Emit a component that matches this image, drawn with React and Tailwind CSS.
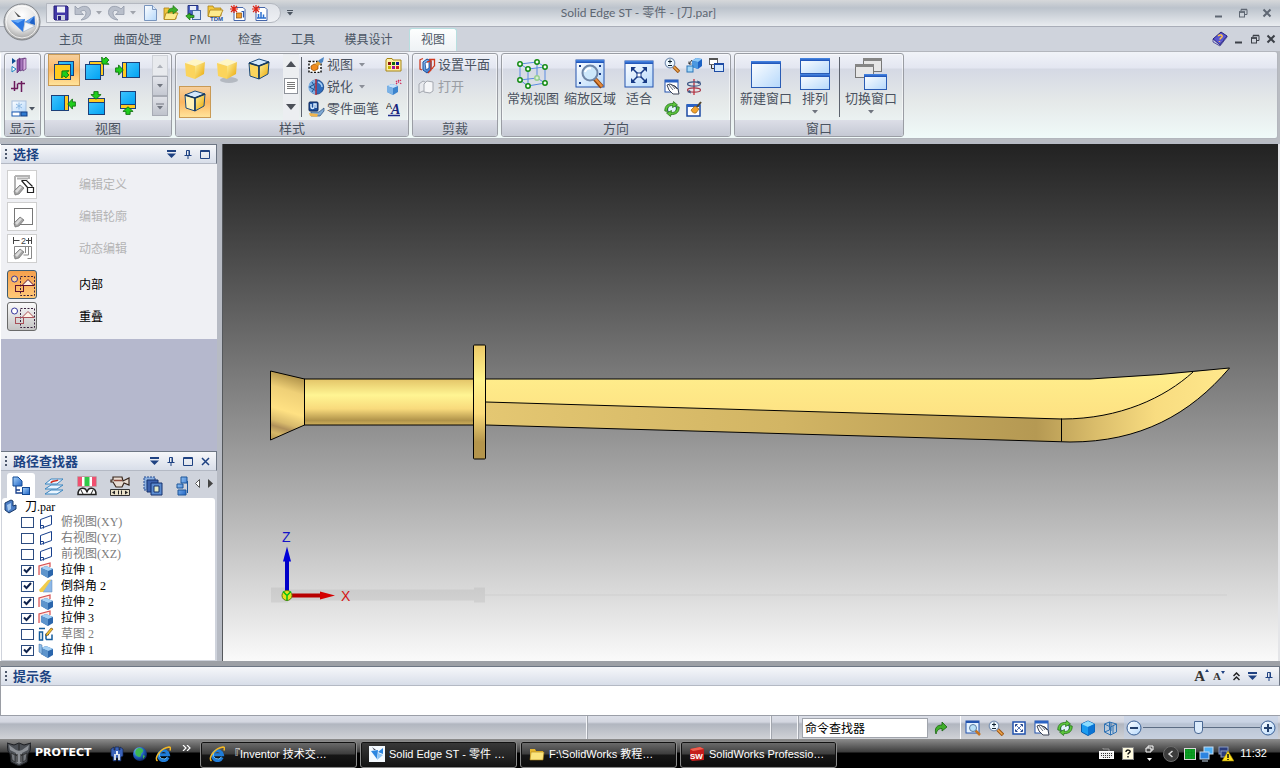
import React, { useState } from "react";

const UI_FONT = "font-['Open_Sans','Noto_Sans_CJK_SC',sans-serif]";
const TITLE_FONT = "font-['Lato','Noto_Sans_CJK_SC',sans-serif]";
const TREE_FONT = "font-['Liberation_Serif','Noto_Sans_CJK_SC',serif]";
const TASK_FONT = "font-['Liberation_Sans','Noto_Sans_CJK_SC',sans-serif]";

// Shared gradients, referenced by url(#id) from every icon
function Defs() {
  return (
    <svg width="0" height="0" className="absolute" aria-hidden="true">
      <defs>
        <linearGradient id="cyan" x1="0" y1="0" x2="1" y2="1">
          <stop offset="0" stopColor="#3fc4ff" />
          <stop offset="1" stopColor="#00a2f2" />
        </linearGradient>
        <linearGradient id="win" x1="0" y1="0" x2="1" y2="1">
          <stop offset="0" stopColor="#ffffff" />
          <stop offset="1" stopColor="#b5d8fb" />
        </linearGradient>
        <linearGradient id="bar" x1="0" y1="0" x2="0" y2="1">
          <stop offset="0" stopColor="#4a8ae6" />
          <stop offset="1" stopColor="#1c4fb4" />
        </linearGradient>
        <linearGradient id="blue" x1="0" y1="0" x2="1" y2="1">
          <stop offset="0" stopColor="#a9d4fb" />
          <stop offset="1" stopColor="#1d62c4" />
        </linearGradient>
        <linearGradient id="gold" x1="0" y1="0" x2="1" y2="1">
          <stop offset="0" stopColor="#fff3a0" />
          <stop offset="1" stopColor="#e9a400" />
        </linearGradient>
        <radialGradient id="orb" cx="0.5" cy="0.3" r="0.7">
          <stop offset="0" stopColor="#ffffff" />
          <stop offset="0.6" stopColor="#e3e3e3" />
          <stop offset="1" stopColor="#9b9b9b" />
        </radialGradient>
        <radialGradient id="globe" cx="0.35" cy="0.3" r="0.8">
          <stop offset="0" stopColor="#9fd0ff" />
          <stop offset="0.5" stopColor="#2263c0" />
          <stop offset="1" stopColor="#06194f" />
        </radialGradient>
      </defs>
    </svg>
  );
}

function Icon({ w = 16, h = 16, children }) {
  return (
    <svg width={w} height={h} viewBox={`0 0 ${w} ${h}`} fill="none" className="block shrink-0" aria-hidden="true">
      {children}
    </svg>
  );
}

function Caret({ color = "#4c5561" }) {
  return (
    <Icon w={6} h={4}>
      <path d="M0 0h6l-3 3.5z" fill={color} />
    </Icon>
  );
}

/* ---------- title bar icons ---------- */

function Orb() {
  return (
    <Icon w={38} h={38}>
      <circle cx="19" cy="19" r="18" fill="url(#orb)" stroke="#7f8389" />
      <circle cx="19" cy="19" r="16" stroke="#fff" strokeOpacity="0.8" />
      <path d="M8 17.500l14-1.500-2 13z" fill="#2b78e4" />
      <path d="M8 17.500l14-1.500-7 4z" fill="#6aaaf6" />
      <path d="M22 19l9.500-6 .5 9z" fill="#1f62c8" />
      <path d="M22 19l9.500-6-6 8z" fill="#5c9cf0" />
      <path d="M22 19l10 4-12 6z" fill="#f2f6fb" stroke="#8b9cb0" strokeWidth="0.5" />
      <path d="M11 8l7 6-3 0z" fill="#555" />
    </Icon>
  );
}

function SaveIcon() {
  return (
    <Icon>
      <path d="M1 1h13l1 1v13H2l-1-1z" fill="#4238a8" stroke="#241c74" />
      <rect x="4" y="1.5" width="8" height="6" fill="#eef1f8" />
      <rect x="4" y="10" width="8" height="5" fill="#c9cfdd" />
      <rect x="5" y="11" width="3" height="4" fill="#2a2280" />
    </Icon>
  );
}

function UndoIcon({ flip }) {
  return (
    <Icon w={17}>
      <g transform={flip ? "translate(17 0) scale(-1 1)" : undefined}>
        <path d="M1 1v8.500h8.500L6.500 7C8.500 4.500 12 5 12 8c0 3-2.500 5-5 7C12.500 14.500 16.500 11.500 16.500 7.500 16.500 0 8 0 4 4z" fill="#b9bfcb" stroke="#9299a8" strokeWidth="0.8" />
      </g>
    </Icon>
  );
}

function NewDocIcon() {
  return (
    <Icon w={13}>
      <path d="M.5 .5h8l4 4v11H.5z" fill="url(#win)" stroke="#7894bd" />
      <path d="M8.500 .5v4h4" fill="#dceafb" stroke="#7894bd" />
    </Icon>
  );
}

function OpenIcon() {
  return (
    <Icon>
      <path d="M1 3h5l1 2h6v9H1z" fill="#f0c63c" stroke="#a97f12" strokeWidth="0.8" />
      <path d="M3 8h12l-3 6.500H1z" fill="#fdeb8e" stroke="#a97f12" strokeWidth="0.8" />
      <path d="M5 8c0-4 2.500-5 5-5V.5L15 5l-5 4V6.500C8 6.500 6.500 7 5 8z" fill="#3fae2a" stroke="#1a6d10" strokeWidth="0.6" />
    </Icon>
  );
}

function SaveAllIcon() {
  return (
    <Icon>
      <path d="M3 .5h10v9H3z" fill="#4c63c4" stroke="#25327e" />
      <rect x="5" y="1" width="6" height="4" fill="#e8edf8" />
      <rect x="7.5" y="5.5" width="8" height="9" fill="#d6e4f8" stroke="#4a6aa6" />
      <path d="M9 12.500H5v2.500L.8 11 5 8v2.300h4z" fill="#38b42a" stroke="#15670c" strokeWidth="0.7" />
    </Icon>
  );
}

function TdmIcon() {
  return (
    <Icon w={17}>
      <path d="M1 1h5l1 2h7v8H1z" fill="#f3c93e" stroke="#a97f12" strokeWidth="0.8" />
      <path d="M3 5h13l-3 6.500H1z" fill="#fdeb8e" stroke="#a97f12" strokeWidth="0.8" />
      <text x="3" y="16" fontSize="6" fontWeight="700" fontFamily="Liberation Sans" fill="#1c4e9c">TDM</text>
    </Icon>
  );
}

function StarDocIcon({ chart }) {
  return (
    <Icon>
      <path d="M4 2.500h9l2 2v11H4z" fill="#fff" stroke="#4565a8" />
      {chart ? (
        <path d="M5 13h9M6.500 13V9M9 13V7M11.500 13V9.500" stroke="#2b6fd0" strokeWidth="1.5" />
      ) : (
        <>
          <rect x="6.5" y="8" width="5" height="5" fill="#f29b2c" stroke="#8b4a08" strokeWidth="0.7" />
          <path d="M11.500 6.500h2v6" stroke="#2b57ad" strokeWidth="1.2" />
        </>
      )}
      <path d="M4 0v8M0 4h8M1 1l6 6M7 1L1 7" stroke="#e02414" strokeWidth="1.2" />
    </Icon>
  );
}

/* ---------- ribbon icons ---------- */

function DisplayA() {
  return (
    <Icon w={17}>
      <path d="M1 1l4 3-4 3z" fill="#0e4f92" />
      <path d="M1 9.500l4 2.500-4 3z" fill="#fff" stroke="#1c86c2" />
      <path d="M6 3l3-2v12l-3 3z" fill="#8b4fa4" stroke="#4f1f64" strokeWidth="0.6" />
      <path d="M9 2l5-1v11l-5 2z" fill="#a878bc" stroke="#4f1f64" strokeWidth="0.6" />
      <path d="M12 2l3-1v11l-3 2z" fill="#d7b0e2" stroke="#4f1f64" strokeWidth="0.6" />
    </Icon>
  );
}

function DisplayB() {
  return (
    <Icon w={15} h={15}>
      <path d="M3.500 2v10M0 9.500h7M10.500 2v11M7 4.500h7M6.500 4.500V9.500" stroke="#6b1b5c" strokeWidth="1.5" />
    </Icon>
  );
}

function DisplayC() {
  return (
    <Icon w={17} h={17}>
      <rect x="1" y="1" width="14" height="11" fill="url(#win)" stroke="#a8c0de" />
      <path d="M8 2.500v7M5 4l6 4M11 4L5 8" stroke="#8cb8e2" />
      <rect x="1" y="12" width="8" height="4" fill="#fff" stroke="#1c5db2" />
      <rect x="10" y="12" width="6" height="4" fill="#2f7ad0" stroke="#123f86" />
    </Icon>
  );
}

function Arrow({ x, y, turn }) {
  return (
    <path d="M-4-2.500h3.500v-3.500L5 0-.5 6v-3.500H-4z" transform={`translate(${x} ${y}) rotate(${turn}) scale(.85)`} fill="#1fce1c" stroke="#0d6b0c" />
  );
}

function ViewIcon({ kind }) {
  const line = { stroke: "#1c3f78", strokeWidth: 1 };
  return (
    <Icon w={28} h={28}>
      {kind === "front" && (
        <>
          <rect x="8.500" y="5.500" width="15" height="14" fill="url(#cyan)" {...line} />
          <rect x="4.500" y="8.500" width="16" height="15" fill="#ffcb1f" {...line} />
          <Arrow x={15} y={18} turn={225} />
        </>
      )}
      {kind === "back" && (
        <>
          <path d="M7.500 5.500h14v14h-3v-11h-11z" fill="#ffcb1f" {...line} />
          <rect x="3.500" y="8.500" width="15" height="15" fill="url(#cyan)" {...line} />
          <Arrow x={23} y={5} turn={135} />
        </>
      )}
      {kind === "left" && (
        <>
          <rect x="8.500" y="6.500" width="4" height="15" fill="#ffcb1f" {...line} />
          <rect x="12.500" y="6.500" width="13" height="15" fill="url(#cyan)" {...line} />
          <Arrow x={5} y={14} turn={0} />
        </>
      )}
      {kind === "right" && (
        <>
          <rect x="1.500" y="6.500" width="13" height="15" fill="url(#cyan)" {...line} />
          <rect x="14.500" y="6.500" width="4" height="15" fill="#ffcb1f" {...line} />
          <Arrow x={22} y={15} turn={180} />
        </>
      )}
      {kind === "top" && (
        <>
          <rect x="6.500" y="9.500" width="16" height="4" fill="#ffcb1f" {...line} />
          <rect x="6.500" y="13.500" width="16" height="12" fill="url(#cyan)" {...line} />
          <Arrow x={14} y={6} turn={90} />
        </>
      )}
      {kind === "bottom" && (
        <>
          <rect x="6.500" y="2.500" width="15" height="13" fill="url(#cyan)" {...line} />
          <rect x="6.500" y="15.500" width="15" height="4" fill="#ffcb1f" {...line} />
          <Arrow x={14} y={22} turn={270} />
        </>
      )}
    </Icon>
  );
}

function StyleCube({ edges, shadow, frame }) {
  const stroke = edges ? "#1c4b7c" : "none";
  return (
    <Icon w={26} h={28}>
      {shadow && <ellipse cx="15" cy="24" rx="9" ry="3" fill="#9aa0a8" fillOpacity="0.6" />}
      <path d="M3 7l10-4 10 3-10 4z" fill={edges ? "#d4e8fc" : "#fff6c4"} stroke={stroke} strokeLinejoin="round" />
      <path d="M3 7l10 3v13L4 20z" fill={frame ? "#fff2b8" : "#fbd45c"} stroke={stroke} strokeLinejoin="round" />
      <path d="M13 10l10-4-1 12-9 5z" fill="url(#gold)" stroke={stroke} strokeLinejoin="round" />
      {edges && <path d="M3 7l10 3v13M13 10l10-4" stroke="#16395f" strokeWidth="1.5" />}
    </Icon>
  );
}

function DashPaint() {
  return (
    <Icon w={17}>
      <rect x="1" y="4.500" width="12" height="11" fill="#fff" stroke="#111" strokeDasharray="2 1.5" strokeWidth="1.5" />
      <path d="M3 9l3-2 4 1v4l-4 2-3-2z" fill="#f08a1c" stroke="#8a4300" strokeWidth="0.7" />
      <path d="M8 6l3-3 5-3-1 5-5 3z" fill="#4e86c4" />
      <path d="M7 7l3-3 3 3-3 2z" fill="#e8a233" />
    </Icon>
  );
}

function SharpenIcon() {
  return (
    <Icon w={17}>
      <circle cx="8.500" cy="8" r="7.200" fill="#2f6cbc" stroke="#14407e" strokeWidth="0.8" />
      <path d="M7.500 .8a7.200 7.200 0 0 0 0 14.400z" fill="#7db0e4" />
      <path d="M1.500 8l6-3.500M1.500 8l6 3.500M4 3l3 5-3 5" stroke="#184d8e" />
      <path d="M10 3c3 1 4 3 4 5" stroke="#a8d0f6" strokeWidth="1.5" />
      <path d="M8 0v16" stroke="#d21c1c" strokeWidth="1.2" />
    </Icon>
  );
}

function PartPaint() {
  return (
    <Icon w={17}>
      <rect x="1" y="1" width="9" height="9" rx="1" fill="#1d4f9c" stroke="#0d2758" />
      <path d="M3 3v3c0 2 3 2 3 0V3h2v4" stroke="#d8ecff" strokeWidth="1.5" />
      <path d="M3 11h8l5-4v3l-4 5H3z" fill="#7fa9d2" stroke="#2a4f7c" strokeWidth="0.7" />
      <path d="M1 12l9 1-1 3-7-1z" fill="#f0b64e" />
    </Icon>
  );
}

function PaletteIcon() {
  const dots = ["#8c1010", "#0d6b0c", "#10109c", "#c8b400", "#9c10a0", "#d02020"];
  return (
    <Icon w={17} h={14}>
      <path d="M1 2l1-1.500h5L8 2h8v11H1z" fill="#fff0a8" stroke="#a68514" />
      {dots.map((c, i) => (
        <rect key={c} x={3 + (i % 3) * 4} y={4 + Math.floor(i / 3) * 4} width="3" height="3" fill={c} />
      ))}
    </Icon>
  );
}

function SparkCube() {
  return (
    <Icon>
      <path d="M1 7l5-2 6 2v6l-5 3-6-3z" fill="#3c84ce" />
      <path d="M1 7l5-2 6 2-5 2z" fill="#c7e3fb" />
      <path d="M1 7l6 2v7l-6-3z" fill="#7bb2e6" />
      <path d="M10 5l5-4M12 1l1 1M14 4l2 1M10 2l1 1" stroke="#d02c5c" strokeWidth="1.2" strokeDasharray="1.5 1" />
    </Icon>
  );
}

function LetterIcon() {
  return (
    <Icon>
      <text x="0" y="8" fontSize="9" fontFamily="Liberation Sans" fill="#111">A</text>
      <text x="5" y="13" fontSize="14" fontWeight="700" fontStyle="italic" fontFamily="Liberation Serif" fill="#16247c">A</text>
      <path d="M2 14.500h12" stroke="#1c2a8c" strokeWidth="1.5" />
    </Icon>
  );
}

function ClipPlane() {
  return (
    <Icon w={18} h={17}>
      <path d="M5 5l4-3 4 2v9l-4 3-4-3z" fill="url(#blue)" stroke="#164a94" />
      <path d="M7 6l4-2v7l-3 2z" fill="#fff" stroke="#164a94" strokeWidth="0.8" />
      <path d="M2 3v9l2 1M1.500 3L5 1.500M11 2.500h5.500v7M9 5l4-1v9l-3 3M16 9l-2 3" stroke="#d03a20" strokeWidth="1.3" />
    </Icon>
  );
}

function ClipOpen() {
  return (
    <Icon w={18}>
      <path d="M1 5l4-3 4 2v9l-4-1-4 2z" fill="#e8eaee" stroke="#a4a8b0" />
      <path d="M6 5l3-3 6 1v9l-3 2-6-1z" fill="#f5f6f8" stroke="#a4a8b0" />
    </Icon>
  );
}

function CommonViews() {
  const pts = [[4, 6], [21, 4], [29, 9], [12, 11], [4, 22], [21, 20], [29, 25], [12, 28]];
  return (
    <Icon w={34} h={32}>
      <path d="M4 6l17-2 8 5-17 2zM4 6v16l8 6V11M12 28l17-3V9M21 4v16M4 22l17-2 8 5" stroke="#5a8be0" />
      {pts.map(([x, y], i) => (
        <circle key={i} cx={x} cy={y} r="2.200" fill={i === 5 ? "#d8f0d4" : "#f4fff2"} stroke={i === 5 ? "#98cf90" : "#128a12"} strokeWidth="1.500" />
      ))}
    </Icon>
  );
}

function ZoomArea() {
  return (
    <Icon w={30} h={30}>
      <rect x="1" y="1" width="28" height="27" fill="url(#win)" stroke="#2253ae" />
      <rect x="1" y="1" width="28" height="3" fill="url(#bar)" />
      <path d="M4 7h2M24 7h2M4 24h2M25 14v2" stroke="#173a86" strokeWidth="2" />
      <path d="M19 19l8 9" stroke="#8c4410" strokeWidth="4.5" />
      <path d="M19.500 19l7.500 8.500" stroke="#e58a3c" strokeWidth="2.5" />
      <circle cx="15" cy="14" r="7.5" fill="#cde8fb" stroke="#6f87a8" strokeWidth="2" />
      <path d="M10 13c1-3 4-4 6-3.500" stroke="#fff" strokeWidth="2" />
    </Icon>
  );
}

function FitIcon({ small }) {
  if (small) {
    return (
      <Icon w={14} h={14}>
        <rect x="1" y="1" width="12" height="12" fill="#fff" stroke="#2253ae" strokeWidth="1.5" />
        <path d="M4 4l6 6M10 4l-6 6" stroke="#5c78b4" />
        <path d="M3.500 5.500v-2h2M8.500 3.500h2v2M3.500 8.500v2h2M10.500 8.500v2h-2" stroke="#173a86" />
      </Icon>
    );
  }
  return (
    <Icon w={30} h={28}>
      <rect x="1" y="1" width="28" height="26" fill="url(#win)" stroke="#2253ae" />
      <rect x="1" y="1" width="28" height="3" fill="url(#bar)" />
      <path d="M9 9l12 12M21 9L9 21" stroke="#173a86" strokeWidth="1.5" />
      <path d="M7 7h5l-5 5zM23 7h-5l5 5zM7 23h5l-5-5zM23 23h-5l5-5z" fill="#173a86" />
      <rect x="13" y="13" width="4" height="4" fill="#fff" stroke="#173a86" />
    </Icon>
  );
}

function Magnifier() {
  return (
    <Icon>
      <path d="M9 9l6 6" stroke="#9c5410" strokeWidth="3.5" />
      <path d="M9.500 9.500l5 5" stroke="#f0a850" strokeWidth="1.5" />
      <circle cx="6" cy="6" r="4.800" fill="#eef8ff" stroke="#7c93b4" strokeWidth="1.2" />
      <path d="M4 4.500h4M6 2.500v4M4 8.500h4" stroke="#123" />
    </Icon>
  );
}

function PanIcon() {
  return (
    <Icon>
      <rect x="1" y="1" width="13" height="12" fill="#fff" stroke="#2253ae" />
      <rect x="1" y="1" width="13" height="2.500" fill="#2a62c4" />
      <path d="M3 6l3-1 2 1 3 1 3 3 1 5H9l-4-4z" fill="#fff" stroke="#3c4456" />
      <path d="M5 6l4 5M7 5l4 5M9 6l4 4" stroke="#3c4456" strokeWidth="0.8" />
    </Icon>
  );
}

function RotateIcon() {
  return (
    <Icon>
      <circle cx="8" cy="8" r="4.500" fill="#e4f2fd" stroke="#24508c" strokeWidth="1.2" />
      <path d="M.8 10C.5 5 4 2 9 2.500L9.500.5l4 3.500-5 2.500.2-2C5 4.500 3 6.500 3.500 10.500zM15.200 6c.3 5-3.200 8-8.200 7.500l-.5 2-4-3.500 5-2.500-.2 2c3.700 0 5.700-2 5.200-6z" fill="#5cc43c" stroke="#1a6a10" strokeWidth="0.7" />
    </Icon>
  );
}

function BlueBlocks() {
  return (
    <Icon w={17}>
      <path d="M6 4l4-3 6 1v7l-4 3-6-2z" fill="#1d62c4" />
      <path d="M6 4l4-3 6 1-4 3z" fill="#8cc8f6" />
      <path d="M6 4l6 1v7l-6-2z" fill="#4b98e0" />
      <rect x="1" y="9" width="6" height="6" fill="#a4d8f8" stroke="#2874b8" />
      <path d="M3 7l3-4M3 7V4.500M3 7h2.500" stroke="#333" />
    </Icon>
  );
}

function SpinIcon() {
  return (
    <Icon>
      <path d="M8 0v16" stroke="#c42430" strokeWidth="1.2" />
      <ellipse cx="8" cy="5" rx="6.500" ry="2.200" stroke="#3c5684" strokeWidth="1.2" />
      <ellipse cx="8" cy="11" rx="6.500" ry="2.200" stroke="#a83848" strokeWidth="1.2" />
      <path d="M11 1.500l4 1.500-3 2zM5 14.500L1 13l3-2z" fill="#3c5684" />
    </Icon>
  );
}

function PaintWindow() {
  return (
    <Icon>
      <rect x="1" y="4" width="13" height="11" fill="#fff" stroke="#1d4ba4" strokeWidth="1.5" />
      <rect x="1" y="3" width="13" height="3" fill="#2a62c4" />
      <path d="M5 9l4-4 4 3-3 4c-2 .5-4-.5-5-3z" fill="#f2a22c" stroke="#8a5408" strokeWidth="0.6" />
      <path d="M11 6l4-5" stroke="#52452c" strokeWidth="2" />
    </Icon>
  );
}

function WindowPair() {
  return (
    <Icon w={17}>
      <rect x="1.500" y="1.500" width="8" height="6" fill="#fff" stroke="#666" />
      <path d="M1 2h9" stroke="#555" strokeWidth="2" />
      <path d="M3.500 8v3.500H6" stroke="#333" />
      <rect x="6.500" y="6.500" width="9" height="8" fill="#d4e8fc" stroke="#1d4ba4" />
      <path d="M6 7h10" stroke="#1d4ba4" strokeWidth="2" />
    </Icon>
  );
}

function Win({ x, y, w, h, grey }) {
  return (
    <>
      <rect x={x + 0.5} y={y + 0.5} width={w - 1} height={h - 1} fill={grey ? "#e6e6e6" : "url(#win)"} stroke={grey ? "#777" : "#2a5cb4"} />
      <rect x={x} y={y} width={w} height="3" fill={grey ? "#858585" : "url(#bar)"} />
    </>
  );
}

/* ---------- small building blocks ---------- */

function Group({ label, className = "", children }) {
  return (
    <section className={`flex flex-col overflow-hidden rounded-[3px] border border-[#9a9da4] shadow-[inset_0_0_0_1px_rgba(255,255,255,0.5)] ${className}`}>
      <div className="flex min-h-0 flex-1">{children}</div>
      <h2 className="h-4 shrink-0 bg-linear-to-b from-[#dcdee7] to-[#c5c9d4] text-center text-[13px] leading-4 text-[#4a5260]">{label}</h2>
    </section>
  );
}

function GalleryCell({ active, label, children }) {
  return (
    <button
      type="button"
      aria-label={label}
      className={
        active
          ? "flex h-8 w-8 items-center justify-center border border-[#c99a55] bg-linear-to-b from-[#f6cf9c] via-[#fbb660] to-[#ffe39a]"
          : "flex h-8 w-8 items-center justify-center"
      }
    >
      {children}
    </button>
  );
}

function RibbonItem({ icon, caret, disabled, children }) {
  return (
    <button type="button" disabled={disabled} className={`flex h-[22px] items-center gap-[2px] whitespace-nowrap text-[13px] ${disabled ? "text-[#9a9da4]" : "text-[#4a5260]"}`}>
      {icon}
      <span>{children}</span>
      {caret && <span className="pl-1"><Caret color="#8b8f98" /></span>}
    </button>
  );
}

function BigButton({ icon, caret, children }) {
  return (
    <button type="button" className="flex shrink-0 flex-col items-center justify-start whitespace-nowrap text-[13px] text-[#4a5260]">
      <span className="flex h-8 items-center">{icon}</span>
      <span className="leading-4">{children}</span>
      {caret && <span className="pt-1"><Caret color="#6f747e" /></span>}
    </button>
  );
}

function IconButton({ label, className = "", children }) {
  return (
    <button type="button" aria-label={label} className={`flex shrink-0 items-center justify-center ${className}`}>
      {children}
    </button>
  );
}

function Divider() {
  return <div className="my-[3px] w-px shrink-0 bg-[#5d636e]" />;
}

/* ---------- window chrome ---------- */

function WindowButtons({ color }) {
  return (
    <>
      <IconButton label="最小化"><Icon w={10} h={10}><path d="M1 8.500h7" stroke={color} strokeWidth="2" /></Icon></IconButton>
      <IconButton label="还原">
        <Icon w={10} h={10}>
          <path d="M3 3V1.500h6v5H7" stroke={color} />
          <rect x="1.500" y="4" width="5" height="5" stroke={color} />
          <path d="M1 4h6M3 1.500h6" stroke={color} strokeWidth="1.5" />
        </Icon>
      </IconButton>
      <IconButton label="关闭"><Icon w={10} h={10}><path d="M1.500 1.500l7 7M8.500 1.500l-7 7" stroke={color} strokeWidth="2" /></Icon></IconButton>
    </>
  );
}

function TitleBar() {
  return (
    <header className="relative flex h-[27px] shrink-0 items-center border-b border-[#a9adb8] bg-linear-to-b from-[#d6d8da] via-[#bcc3cc] via-30% to-[#e9ecf0] pl-[46px]">
      <div className="absolute top-[3px] left-[3px] z-10">
        <button type="button" aria-label="应用程序按钮"><Orb /></button>
      </div>
      <div className="flex h-5 w-[235px] shrink-0 items-center rounded-r-full border border-[#b4b8c0] bg-linear-to-b from-[#dfe2e8] to-[#eef0f4] pl-[6px]">
        <IconButton label="保存"><SaveIcon /></IconButton>
        <IconButton label="撤消" className="ml-[5px]"><UndoIcon /></IconButton>
        <IconButton label="撤消列表" className="ml-[5px]"><Caret color="#a0a4ac" /></IconButton>
        <IconButton label="重做" className="ml-[6px]"><UndoIcon flip /></IconButton>
        <IconButton label="重做列表" className="ml-[5px]"><Caret color="#a0a4ac" /></IconButton>
        <div className="ml-2 flex items-center gap-[6px]">
          <IconButton label="新建"><NewDocIcon /></IconButton>
          <IconButton label="打开"><OpenIcon /></IconButton>
          <IconButton label="全部保存"><SaveAllIcon /></IconButton>
          <IconButton label="TDM"><TdmIcon /></IconButton>
          <IconButton label="新建零件"><StarDocIcon /></IconButton>
          <IconButton label="新建图纸"><StarDocIcon chart /></IconButton>
        </div>
      </div>
      <IconButton label="自定义" className="ml-[6px]">
        <Icon w={6} h={6}><path d="M0 .5h6" stroke="#4c5561" /><path d="M0 2h6l-3 3.500z" fill="#4c5561" /></Icon>
      </IconButton>
      <h1 className={`flex-1 pl-14 text-center text-xs whitespace-nowrap text-[#5d6672] ${TITLE_FONT}`}>Solid Edge ST - 零件 - [刀.par]</h1>
      <div className="flex w-[352px] shrink-0 items-center justify-end gap-[14px] pr-2">
        <WindowButtons color="#5f6773" />
      </div>
    </header>
  );
}

const TABS = [
  { name: "主页", width: "w-[66px]" },
  { name: "曲面处理", width: "w-[67px]" },
  { name: "PMI", width: "w-[58px]" },
  { name: "检查", width: "w-[42px]" },
  { name: "工具", width: "w-[64px]" },
  { name: "模具设计", width: "w-[67px] mr-[7px]" },
  { name: "视图", width: "w-12" },
];

function TabRow({ tab, setTab }) {
  return (
    <nav className="flex h-6 shrink-0 items-end bg-[#cfd3dc] pl-[38px]">
      <div className="flex h-[23px]">
        {TABS.map((t) => (
          <button
            key={t.name}
            type="button"
            onClick={() => setTab(t.name)}
            className={`${t.width} text-center text-xs whitespace-nowrap text-[#4a5564] ${
              tab === t.name ? "rounded-t-[3px] border border-b-0 border-[#b7dfe0] bg-linear-to-b from-[#fdfefe] to-[#eef2f5]" : ""
            }`}
          >
            {t.name}
          </button>
        ))}
      </div>
      <div className="ml-auto flex h-6 items-center gap-[6px] pr-1">
        <IconButton label="帮助">
          <Icon>
            <path d="M1 8l8-7 6 4-7 9z" fill="#5a57d0" stroke="#25207c" />
            <path d="M1 8v3l7 4 7-9V5l-7 9z" fill="#c9cdf0" stroke="#25207c" strokeWidth="0.7" />
            <path d="M6 5c2-2 5-1 4 1-.5 1-2 1-2 2.500M7.500 10v1" stroke="#ffc24a" strokeWidth="1.5" />
          </Icon>
        </IconButton>
        <WindowButtons color="#3c4048" />
      </div>
    </nav>
  );
}

function GalleryScroll() {
  return (
    <div className="mt-px flex w-4 shrink-0 flex-col">
      <button type="button" aria-label="上一行" className="flex h-[21px] items-center justify-center border border-[#cfd2d8] bg-[#e8eaee]"><span className="rotate-180"><Caret color="#aeb2ba" /></span></button>
      <button type="button" aria-label="下一行" className="flex h-5 items-center justify-center border border-[#a7abb4] bg-linear-to-b from-[#e2e4ea] to-[#c5c9d2]"><Caret color="#70757f" /></button>
      <button type="button" aria-label="更多" className="flex h-5 items-center justify-center border border-[#a7abb4] bg-linear-to-b from-[#dfe1e7] to-[#bfc3cc]">
        <Icon w={8} h={7}><path d="M0 1h8" stroke="#70757f" /><path d="M1 3h6l-3 3.500z" fill="#70757f" /></Icon>
      </button>
    </div>
  );
}

function Ribbon() {
  return (
    <div className="shrink-0 bg-[#b9bcc2] pb-[3px]">
      <div className="mr-[2px] flex h-[88px] gap-[3px] rounded-[3px] border border-[#b3b6bd] border-l-white bg-[linear-gradient(#f1f3f8_0,#e3e6f1_16px,#d5d9e4_17px,#e5e9e9_50px,#f0faf9_100%)] px-[3px] pt-px pb-px">
        <Group label="显示" className="w-[37px]">
          <div className="flex flex-col gap-[6px] pt-[3px] pl-[6px]">
            <IconButton label="构造显示" className="justify-start!"><DisplayA /></IconButton>
            <IconButton label="坐标系" className="justify-start!"><DisplayB /></IconButton>
            <IconButton label="背景" className="gap-px"><DisplayC /><Caret /></IconButton>
          </div>
        </Group>

        <Group label="视图" className="w-32">
          <div className="ml-[3px] grid grid-cols-3 grid-rows-2">
            <GalleryCell active label="前视图"><ViewIcon kind="front" /></GalleryCell>
            <GalleryCell label="后视图"><ViewIcon kind="back" /></GalleryCell>
            <GalleryCell label="左视图"><ViewIcon kind="left" /></GalleryCell>
            <GalleryCell label="右视图"><ViewIcon kind="right" /></GalleryCell>
            <GalleryCell label="俯视图"><ViewIcon kind="top" /></GalleryCell>
            <GalleryCell label="仰视图"><ViewIcon kind="bottom" /></GalleryCell>
          </div>
          <div className="ml-auto flex pr-[3px]"><GalleryScroll /></div>
        </Group>

        <Group label="样式" className="w-[234px]">
          <div className="ml-[3px] grid w-[104px] grid-cols-[32px_32px_32px] content-start">
            <GalleryCell label="着色"><StyleCube /></GalleryCell>
            <GalleryCell label="着色带阴影"><StyleCube shadow /></GalleryCell>
            <GalleryCell label="着色带隐藏边"><StyleCube edges /></GalleryCell>
            <GalleryCell active label="着色带可见边"><StyleCube edges frame /></GalleryCell>
          </div>
          <div className="flex w-4 shrink-0 flex-col items-center justify-between bg-[#eceef1] pt-[7px] pb-[10px]">
            <Icon w={10} h={6}><path d="M0 6h10L5 0z" fill="#4c5058" /></Icon>
            <div className="flex h-4 w-[14px] flex-col items-center justify-center gap-px border border-[#8f939b] bg-white">
              <i className="h-px w-2 bg-[#777]" /><i className="h-px w-2 bg-[#777]" /><i className="h-px w-2 bg-[#777]" /><i className="h-px w-2 bg-[#777]" />
            </div>
            <Icon w={10} h={6}><path d="M0 0h10L5 6z" fill="#4c5058" /></Icon>
          </div>
          <div className="flex pl-[2px]"><Divider /></div>
          <div className="flex flex-col pl-[6px]">
            <RibbonItem icon={<DashPaint />} caret>视图</RibbonItem>
            <RibbonItem icon={<SharpenIcon />} caret>锐化</RibbonItem>
            <RibbonItem icon={<PartPaint />}>零件画笔</RibbonItem>
          </div>
          <div className="ml-auto flex flex-col pr-[6px]">
            <IconButton label="颜色管理器" className="h-[22px]"><PaletteIcon /></IconButton>
            <IconButton label="视图覆盖" className="h-[22px]"><SparkCube /></IconButton>
            <IconButton label="字体" className="h-[22px]"><LetterIcon /></IconButton>
          </div>
        </Group>

        <Group label="剪裁" className="w-[86px]">
          <div className="flex flex-col pl-[5px]">
            <RibbonItem icon={<ClipPlane />}>设置平面</RibbonItem>
            <RibbonItem icon={<ClipOpen />} disabled>打开</RibbonItem>
          </div>
        </Group>

        <Group label="方向" className="w-[230px]">
          <div className="flex items-start gap-[5px] pt-1 pl-[5px]">
            <BigButton icon={<CommonViews />}>常规视图</BigButton>
            <BigButton icon={<ZoomArea />}>缩放区域</BigButton>
          </div>
          <div className="flex items-start pt-1 pl-2"><BigButton icon={<FitIcon />}>适合</BigButton></div>
          <div className="ml-auto grid grid-cols-[22px_22px_22px] grid-rows-[22px_22px_22px] pr-[3px]">
            <IconButton label="缩放"><Magnifier /></IconButton>
            <IconButton label="定向"><BlueBlocks /></IconButton>
            <IconButton label="上一视图"><WindowPair /></IconButton>
            <IconButton label="平移"><PanIcon /></IconButton>
            <IconButton label="绕轴旋转"><SpinIcon /></IconButton>
            <span />
            <IconButton label="旋转"><RotateIcon /></IconButton>
            <IconButton label="草图视图"><PaintWindow /></IconButton>
          </div>
        </Group>

        <Group label="窗口" className="w-[170px]">
          <div className="flex items-start gap-2 pt-1 pl-[5px]">
            <BigButton icon={<Icon w={30} h={27}><Win x={0} y={0} w={30} h={27} /></Icon>}>新建窗口</BigButton>
            <BigButton caret icon={<Icon w={30} h={32}><Win x={0} y={0} w={30} h={16} /><Win x={0} y={16} w={30} h={16} /></Icon>}>排列</BigButton>
          </div>
          <div className="ml-[9px] flex"><Divider /></div>
          <div className="flex items-start pt-1 pl-[5px]">
            <BigButton caret icon={<Icon w={34} h={32}><Win x={9} y={0} w={19} h={14} grey /><Win x={1} y={6} w={19} h={14} grey /><Win x={10} y={16} w={23} h={16} /></Icon>}>切换窗口</BigButton>
          </div>
        </Group>
      </div>
    </div>
  );
}

/* ---------- left panes ---------- */

function MenuGlyph() {
  return <Icon w={9} h={8}><path d="M0 1h9" stroke="#1f4282" strokeWidth="2" /><path d="M0 3.500h9L4.500 8z" fill="#1f4282" /></Icon>;
}

function PinGlyph() {
  return <Icon w={8} h={9}><path d="M2.500 5V.5h3V5M.5 5.500h7M4 5.500V9M5 1v4" stroke="#1f4282" /></Icon>;
}

function FloatGlyph() {
  return <Icon w={10} h={9}><path d="M.5 .5h9v8h-9zM.5 1.500h9" stroke="#1f4282" /></Icon>;
}

function PaneHeader({ title, children }) {
  return (
    <div className="flex h-5 shrink-0 items-center border-t border-r border-t-[#6d7684] border-r-[#6d7684] border-b border-b-[#b4b9c4] bg-linear-to-b from-[#f6f7fa] to-[#d8dee9] pr-[6px] pl-1">
      <Icon w={2} h={10}><path d="M1 0v2M1 4v2M1 8v2" stroke="#4d586c" strokeWidth="2" /></Icon>
      <h2 className="ml-[6px] flex-1 text-[13px] leading-none font-bold text-[#1c4382]">{title}</h2>
      <div className="flex items-center gap-2">{children}</div>
    </div>
  );
}

function PencilTip() {
  return (
    <>
      <path d="M5 19l6-6 4 3-5 6-4 1z" fill="#a4a4a4" stroke="#6c6c6c" strokeWidth="0.7" />
      <path d="M6 19l5-5 2 1-5 6z" fill="#dcdcdc" />
    </>
  );
}

function SelectArt({ kind }) {
  return (
    <Icon w={26} h={26}>
      {kind === "define" && (
        <>
          <path d="M6 4h14v3M6 4v14M8 6.500h11" stroke="#b4b4b4" strokeWidth="2" />
          <path d="M12.500 8.500h5l6 6M12.500 8.500l6 7M18.500 15.500h6v5h-6z" stroke="#222" strokeWidth="1.2" fill="#fff" />
          <PencilTip />
        </>
      )}
      {kind === "profile" && (
        <>
          <rect x="5.500" y="4.500" width="18" height="16" stroke="#777" />
          <PencilTip />
        </>
      )}
      {kind === "dynamic" && (
        <>
          <path d="M4.500 1v7M4.500 4.500h6M17 4.500h6M19.500 2v6M22.500 1v7" stroke="#444" />
          <text x="12" y="8" fontSize="9" fontFamily="Liberation Sans" fill="#444">2</text>
          <path d="M5.500 10.500h17v12h-4M19.500 11v8h-5M16.500 11v6M5.500 10.500V18" stroke="#888" />
          <PencilTip />
        </>
      )}
      {(kind === "inside" || kind === "overlap") && (
        <g stroke={kind === "inside" ? "#5c1030" : "#a85058"}>
          <rect x="11.500" y="4.500" width="14" height="19" strokeDasharray="2 1.5" stroke="#39223e" />
          <circle cx="5.500" cy="7" r="3" stroke="#34349c" fill={kind === "inside" ? "#ffd79a" : "#fff"} />
          <path d="M13 13.500l6-6 6 6z" fill="#fff3e6" />
          <rect x="6.500" y="13.500" width="8" height="6" />
        </g>
      )}
    </Icon>
  );
}

const SELECT_ROWS = [
  { kind: "define", label: "编辑定义", disabled: true },
  { kind: "profile", label: "编辑轮廓", disabled: true },
  { kind: "dynamic", label: "动态编辑", disabled: true },
  { kind: "inside", label: "内部", space: true },
  { kind: "overlap", label: "重叠" },
];

const SELECT_FRAMES = {
  inside: "rounded-[3px] border-[#3f5c70] bg-linear-to-b from-[#f5a04c] to-[#ffc978]",
  overlap: "rounded-[3px] border-[#6a6a6a] bg-linear-to-b from-[#fafafa] to-[#c4c4c4]",
};

function SelectPane() {
  return (
    <section>
      <PaneHeader title="选择">
        <IconButton label="菜单"><MenuGlyph /></IconButton>
        <IconButton label="固定"><PinGlyph /></IconButton>
        <IconButton label="浮动"><FloatGlyph /></IconButton>
      </PaneHeader>
      <div className="flex flex-col gap-[3px] bg-[#eff0f4] pt-[6px] pb-2 pl-[6px]">
        {SELECT_ROWS.map((row) => (
          <button key={row.kind} type="button" disabled={row.disabled} className={`flex items-center text-left ${row.space ? "mt-1" : ""}`}>
            <span className={`flex h-[29px] w-[30px] items-center justify-center border ${SELECT_FRAMES[row.kind] || "border-[#cfcfcf] bg-white"}`}>
              <SelectArt kind={row.kind} />
            </span>
            <span className={`ml-[42px] text-xs ${row.disabled ? "text-[#b4b4b4]" : "text-black"}`}>{row.label}</span>
          </button>
        ))}
      </div>
    </section>
  );
}

function TreeIcon({ kind }) {
  return (
    <Icon>
      {kind === "plane" && <path d="M2.500 5.500l11-4v9l-11 4zM2.500 11.500h3v3" stroke="#173f8c" />}
      {(kind === "extrude" || kind === "body") && (
        <>
          {kind === "extrude" && <path d="M1 13V4l11-3v4" stroke="#d85050" strokeWidth="1.2" fill="#fde8e4" />}
          <path d="M3 6l5-2 7 3v6l-5 3-7-4z" fill="#2b66ac" />
          <path d="M3 6l5-2 7 3-5 2z" fill="#a4d0f4" />
          <path d="M3 6l7 3v7l-7-4z" fill="#5d94cc" />
          {kind === "body" && <path d="M1 2l3 1v9l-3-2z" fill="#8fbce6" stroke="#3c6ca0" strokeWidth="0.5" />}
        </>
      )}
      {kind === "chamfer" && (
        <>
          <path d="M5 14L11 2h3v12z" fill="#8cb8e8" stroke="#5c84b4" strokeWidth="0.5" />
          <path d="M1 12L10 2h3L5 14H2z" fill="#f1cc4c" />
        </>
      )}
      {kind === "sketch" && (
        <>
          <path d="M1 2.500h6M1.500 6v8h3V6zM8 13.500h6v-5M8 13.500v-5h3" stroke="#155c9c" strokeWidth="1.5" />
          <path d="M8 8l5-6 2 1-5 6-2 1z" fill="#f2c22c" stroke="#6c3c08" strokeWidth="0.6" />
        </>
      )}
    </Icon>
  );
}

const TREE = [
  { id: 1, name: "俯视图(XY)", kind: "plane", on: false },
  { id: 2, name: "右视图(YZ)", kind: "plane", on: false },
  { id: 3, name: "前视图(XZ)", kind: "plane", on: false },
  { id: 4, name: "拉伸 1", kind: "extrude", on: true },
  { id: 5, name: "倒斜角 2", kind: "chamfer", on: true },
  { id: 6, name: "拉伸 2", kind: "extrude", on: true },
  { id: 7, name: "拉伸 3", kind: "extrude", on: true },
  { id: 8, name: "草图 2", kind: "sketch", on: false },
  { id: 9, name: "拉伸 1", kind: "body", on: true },
];

function TreeRow({ item, onToggle }) {
  return (
    <li className="h-4">
      <label className={`flex h-4 items-center pl-[19px] text-xs ${item.on ? "text-black" : "text-[#7c7c7c]"}`}>
        <span className="relative flex">
          <input type="checkbox" checked={item.on} onChange={onToggle} className="h-[11px] w-[13px] appearance-none border border-[#2c4c80] bg-white" />
          {item.on && (
            <span className="pointer-events-none absolute top-px left-[2px]">
              <Icon w={9} h={8}><path d="M1 3.500l2.500 2.500L8 1" stroke="#10234c" strokeWidth="2" /></Icon>
            </span>
          )}
        </span>
        <span className="ml-1"><TreeIcon kind={item.kind} /></span>
        <span className="ml-[7px]">{item.name}</span>
      </label>
    </li>
  );
}

function PathFinder() {
  const [items, setItems] = useState(TREE);

  const toggle = (id) => {
    setItems(items.map((it) => (it.id === id ? { ...it, on: !it.on } : it)));
  };

  return (
    <section className="mt-auto bg-[#cfd3dc]">
      <PaneHeader title="路径查找器">
        <IconButton label="菜单"><MenuGlyph /></IconButton>
        <IconButton label="固定"><PinGlyph /></IconButton>
        <IconButton label="浮动"><FloatGlyph /></IconButton>
        <IconButton label="关闭"><Icon w={9} h={9}><path d="M1 1l7 7M8 1L1 8" stroke="#1f4282" strokeWidth="1.5" /></Icon></IconButton>
      </PaneHeader>
      <div className="flex h-[27px] items-end pl-[6px]">
        <button type="button" aria-label="路径查找器" className="flex h-[25px] w-7 items-center justify-center rounded-t-[3px] bg-white">
          <Icon w={20} h={20}>
            <path d="M5 10v7h7M5 14h4" stroke="#173f8c" strokeWidth="1.3" />
            <path d="M2 1h5l4 4v5H2z" fill="url(#blue)" stroke="#134a94" />
            <rect x="11.500" y="11.500" width="7" height="7" fill="url(#blue)" stroke="#134a94" />
          </Icon>
        </button>
        <div className="flex h-[25px] items-center gap-[13px] pl-[9px]">
          <IconButton label="层">
            <Icon w={20} h={20}>
              <path d="M1 18l6-4h12l-6 4zM1 13l6-4h12l-6 4zM1 8l6-5h12l-6 5z" fill="#eaf5ff" stroke="#3b85bf" />
              <path d="M7 7c1-3 5-1 7-3" stroke="#d02c1c" strokeWidth="1.5" />
            </Icon>
          </IconButton>
          <IconButton label="传感器">
            <Icon w={20} h={20}>
              <path d="M.5 .5h19v10H.5z" fill="#fff" stroke="#c0a0a8" />
              <path d="M1 1h4v9H1zM15 1h4v9h-4z" fill="#f05070" />
              <path d="M7.500 1h5v9h-5z" fill="#30c848" />
              <path d="M1 18.500c0-8 8.500-8 9-2 .5-6 9-6 9 2z" fill="#fff" stroke="#222" strokeWidth="1.5" />
              <path d="M6 18l-2-4M14 18l2-4" stroke="#222" />
            </Icon>
          </IconButton>
          <IconButton label="特征回放">
            <Icon w={20} h={20}>
              <path d="M3 1h9l1 4 6-3v7l-5-2-2 4H6L3 6H1V4h2z" fill="#e8dcd2" stroke="#38261c" strokeWidth="1.2" />
              <path d="M4 4.500h8" stroke="#8c4a3c" strokeWidth="1.5" />
              <path d="M.5 13.500h19v6H.5z" fill="#e8e0c8" stroke="#333" />
              <path d="M5 14.500l-3 2 3 2zM15 14.500l3 2-3 2zM8 14.500v4h1v-4zM11 14.500v4h1v-4z" fill="#222" />
            </Icon>
          </IconButton>
          <IconButton label="零件库">
            <Icon w={20} h={20}>
              <path d="M1 1h11v13H1z" fill="#8cb0e0" stroke="#244a90" strokeDasharray="2 1" />
              <path d="M4 4h11v12H4z" fill="#3a60ac" stroke="#14306c" />
              <path d="M8 7h11v12H8z" fill="#5c8cd0" stroke="#14306c" />
              <path d="M11 10h5v6h-5z" fill="#e4ecc8" stroke="#14306c" />
            </Icon>
          </IconButton>
          <IconButton label="族">
            <Icon w={12} h={20}>
              <path d="M5 1h6v6H5zM1 8h6v4H1zM2 14h8v5H2z" fill="url(#blue)" stroke="#1c5498" />
              <path d="M11.500 5v12" stroke="#1c5498" />
            </Icon>
          </IconButton>
        </div>
        <div className="ml-auto flex h-[30px] items-center gap-2 pr-1">
          <IconButton label="向左"><Icon w={5} h={9}><path d="M4.500 .5v8L.5 4.500z" fill="#fff" stroke="#555" /></Icon></IconButton>
          <IconButton label="向右"><Icon w={5} h={9}><path d="M0 0v9l5-4.500z" fill="#444" /></Icon></IconButton>
        </div>
      </div>
      <div className={`mr-[2px] mb-px ml-px h-[162px] overflow-hidden rounded-t-[3px] bg-white ${TREE_FONT}`}>
        <p className="flex h-4 items-center gap-2 pt-px pl-[2px] text-xs text-black">
          <Icon w={13} h={15}>
            <path d="M1 4l6-3 2 1v5l3-1v4l-7 4-4-3z" fill="#4a7cc4" stroke="#173868" />
            <path d="M3 6l4-2v6l-3 2z" fill="#a4c8f0" />
          </Icon>
          刀.par
        </p>
        <ul>
          {items.map((item) => (
            <TreeRow key={item.id} item={item} onToggle={() => toggle(item.id)} />
          ))}
        </ul>
      </div>
    </section>
  );
}

/* ---------- model viewport ---------- */

function Viewport() {
  return (
    <main className="min-w-0 flex-1 overflow-hidden border-l border-[#55585c] bg-linear-to-b from-[#222222] to-[#fafafa]">
      <svg viewBox="223 145 1055 516" className="h-full w-full" fill="none" aria-label="刀.par">
        <defs>
          <linearGradient id="grip" x1="0" y1="0" x2="0" y2="1">
            <stop offset="0" stopColor="#e3c468" />
            <stop offset="0.35" stopColor="#fff593" />
            <stop offset="0.65" stopColor="#f8da7c" />
            <stop offset="0.9" stopColor="#b0934a" />
            <stop offset="1" stopColor="#d0b05c" />
          </linearGradient>
          <linearGradient id="pommel" x1="0" y1="0" x2="-0.15" y2="1">
            <stop offset="0" stopColor="#b99b50" />
            <stop offset="0.2" stopColor="#efd077" />
            <stop offset="0.5" stopColor="#ffe183" />
            <stop offset="0.68" stopColor="#d8ba6c" />
            <stop offset="0.76" stopColor="#b0905a" />
            <stop offset="0.86" stopColor="#d6b868" />
            <stop offset="1" stopColor="#a88a48" />
          </linearGradient>
          <linearGradient id="guard" x1="0" y1="0" x2="0" y2="1">
            <stop offset="0" stopColor="#ecc968" />
            <stop offset="0.3" stopColor="#fff48e" />
            <stop offset="0.6" stopColor="#fcdc7c" />
            <stop offset="0.85" stopColor="#b4954c" />
            <stop offset="1" stopColor="#b4954c" />
          </linearGradient>
          <linearGradient id="flat" x1="0" y1="0" x2="0" y2="1">
            <stop offset="0" stopColor="#ffee8c" />
            <stop offset="1" stopColor="#fde182" />
          </linearGradient>
          <linearGradient id="edge" x1="0" y1="0" x2="1" y2="0">
            <stop offset="0" stopColor="#e4c772" />
            <stop offset="0.4" stopColor="#d2b564" />
            <stop offset="0.74" stopColor="#b59953" />
            <stop offset="0.82" stopColor="#dabd6b" />
            <stop offset="0.9" stopColor="#f8dc80" />
            <stop offset="1" stopColor="#ffe88c" />
          </linearGradient>
        </defs>
        <g fill="#000" fillOpacity="0.06">
          <rect x="271" y="588" width="17" height="15" />
          <rect x="288" y="590" width="186" height="11" />
          <rect x="474" y="588" width="11" height="15" />
          <rect x="485" y="595" width="742" height="1" />
        </g>
        {/* blade: bevel first, flat on top, then the outlines */}
        <path d="M486 379.500H1090Q1160 376 1229.500 368.500C1190 415 1140 442.500 1070 442.500L486 425.500z" fill="url(#edge)" />
        <path d="M486 379.500H1090Q1141.500 377 1193 372.500C1165 398 1120 419.500 1062 419.500L486 402.500z" fill="url(#flat)" />
        <g stroke="#000" strokeWidth="1">
          <path d="M486 379.500H1090Q1160 376 1229.500 368.500C1190 415 1140 442.500 1070 442.500L486 425.500M1193 372.500C1165 398 1120 419.500 1062 419.500L486 402.500M1061.500 419v23" />
          <rect x="304.500" y="379.500" width="169" height="46" fill="url(#grip)" />
          <path d="M270.500 371.500l34 8v46l-34 15z" fill="url(#pommel)" />
          <rect x="473.500" y="345.500" width="12" height="114" rx="1" fill="url(#guard)" />
        </g>
        <rect x="285" y="560" width="4" height="33" fill="#0000c8" />
        <path d="M287 547l4 15h-8z" fill="#0000d8" />
        <rect x="292" y="594" width="32" height="4" fill="#b80000" />
        <path d="M335 596l-15 4v-8z" fill="#d40000" />
        <circle cx="287" cy="596" r="5" fill="#e8e020" stroke="#5a7c10" />
        <path d="M283 592l4 4 4-4M287 596v5" stroke="#00c010" strokeWidth="1.5" />
        <text x="282" y="542" fontSize="14" fontFamily="Liberation Sans" fill="#1414c8">Z</text>
        <text x="341" y="601" fontSize="14" fontFamily="Liberation Sans" fill="#d41414">X</text>
      </svg>
    </main>
  );
}

/* ---------- bottom bars ---------- */

function PromptBar() {
  return (
    <section className="mt-[5px] shrink-0 border-l border-[#9a9da4] bg-white">
      <PaneHeader title="提示条">
        <button type="button" aria-label="增大字体" className="flex items-start font-['Liberation_Serif',serif] text-[15px] leading-none font-bold text-[#333]">A<Icon w={4} h={3}><path d="M0 3h4L2 0z" fill="#1f4282" /></Icon></button>
        <button type="button" aria-label="减小字体" className="-ml-1 flex items-start font-['Liberation_Serif',serif] text-[11px] leading-none font-bold text-[#333]">A<Icon w={4} h={3}><path d="M0 0h4L2 3z" fill="#1f4282" /></Icon></button>
        <IconButton label="折叠"><Icon w={7} h={9}><path d="M.5 4l3-3 3 3M.5 8l3-3 3 3" stroke="#222" strokeWidth="1.5" /></Icon></IconButton>
        <IconButton label="菜单"><MenuGlyph /></IconButton>
        <IconButton label="固定"><PinGlyph /></IconButton>
      </PaneHeader>
      <div className="h-[29px]" />
    </section>
  );
}

function StatusBar() {
  return (
    <footer className="flex h-6 shrink-0 items-stretch border-t border-[#9b9fa8] bg-[linear-gradient(#dcdfe8,#d3d6e0_6px,#b1b6c0_8px,#d0d2d6)]">
      <div className="flex-1 border-r border-[#f4f5f8]" />
      <div className="w-[184px] shrink-0 border-r border-l border-r-[#f4f5f8] border-l-[#a2a6ae]" />
      <div className="w-[27px] shrink-0 border-r border-l border-r-[#f4f5f8] border-l-[#a2a6ae]" />
      <div className="flex shrink-0 items-center border-l border-[#a2a6ae] pl-[3px]">
        <input
          aria-label="命令查找器"
          defaultValue="命令查找器"
          className={`h-5 w-[126px] border border-[#a0a4ac] bg-white px-[2px] text-xs text-black outline-none ${UI_FONT}`}
        />
        <IconButton label="查找" className="ml-[5px]">
          <Icon><path d="M3 14C1 8 4 5 9 5V2l5 5-5 4V8.500C6 8.500 4 10 3 14z" fill="#3fae2a" stroke="#17620e" strokeWidth="0.8" /></Icon>
        </IconButton>
      </div>
      <div className="ml-[11px] flex shrink-0 items-center gap-[7px] border-l border-white pl-1">
        <IconButton label="缩放区域" className="w-4">
          <Icon>
            <rect x="1" y="1" width="13" height="12" fill="#e4f2ff" stroke="#2253ae" />
            <rect x="1" y="1" width="13" height="2" fill="#2253ae" />
            <path d="M10 10l5 5" stroke="#c47424" strokeWidth="2.5" />
            <circle cx="8" cy="8" r="3.5" fill="#b8e0f8" stroke="#5c7ca0" />
          </Icon>
        </IconButton>
        <IconButton label="缩放" className="w-4"><Magnifier /></IconButton>
        <IconButton label="适合" className="w-4"><FitIcon small /></IconButton>
        <IconButton label="平移" className="w-4"><PanIcon /></IconButton>
        <IconButton label="旋转" className="w-4"><RotateIcon /></IconButton>
        <IconButton label="视图方向" className="w-4">
          <Icon>
            <path d="M1.500 4L8 1l6.500 3v8L8 15.500 1.500 12z" fill="#1c9cf0" stroke="#0b5cac" />
            <path d="M1.500 4L8 1l6.500 3L8 7z" fill="#8cdcff" />
            <path d="M8 7l6.500-3v8L8 15.500z" fill="#0c74d4" />
          </Icon>
        </IconButton>
        <IconButton label="视图样式" className="w-4">
          <Icon><path d="M1.500 4l6 3v8l-6-3zM7.500 7l6-3v8l-6 3M1.500 4l5-2v8l-5 2M8 2v9M6.500 2l7 2M10 6v7" stroke="#2f72b4" fill="#b4d8f4" fillOpacity="0.4" /></Icon>
        </IconButton>
      </div>
      <div className="mr-[2px] ml-[5px] flex w-[154px] shrink-0 items-center justify-between bg-[#bfd0e8]/50 px-[2px]">
        <IconButton label="缩小"><Icon><circle cx="8" cy="8" r="7" fill="url(#win)" stroke="#3a6096" /><path d="M4 8h8" stroke="#24406c" strokeWidth="2" /></Icon></IconButton>
        <input
          type="range"
          aria-label="缩放比例"
          defaultValue="48"
          className="h-4 w-[117px] appearance-none bg-[linear-gradient(#5c6c84,#5c6c84)] bg-[length:100%_1px] bg-center bg-no-repeat [&::-webkit-slider-thumb]:h-[13px] [&::-webkit-slider-thumb]:w-[9px] [&::-webkit-slider-thumb]:appearance-none [&::-webkit-slider-thumb]:rounded-b-[4px] [&::-webkit-slider-thumb]:border [&::-webkit-slider-thumb]:border-[#4a6894] [&::-webkit-slider-thumb]:bg-[#dcebfb]"
        />
        <IconButton label="放大"><Icon><circle cx="8" cy="8" r="7" fill="url(#win)" stroke="#3a6096" /><path d="M4 8h8M8 4v8" stroke="#24406c" strokeWidth="2" /></Icon></IconButton>
      </div>
    </footer>
  );
}

function IeIcon() {
  return (
    <Icon>
      <path d="M13.200 11.500A5 5 0 1 1 13.500 8.800H4.500" stroke="#1f7cd8" strokeWidth="3" />
      <path d="M12.500 11A4.500 4.500 0 0 1 4.500 7" stroke="#6cc4fa" strokeWidth="1" />
      <path d="M2.500 15C-1.500 12 6 2 14 1c2 0 1.500 2 1 3.500" stroke="#f4b824" strokeWidth="1.5" />
    </Icon>
  );
}

const TASKS = [
  { name: "『Inventor 技术交…", icon: <IeIcon /> },
  {
    name: "Solid Edge ST - 零件 …",
    active: true,
    icon: (
      <Icon>
        <rect width="16" height="16" fill="#f4faff" />
        <path d="M2 5l7-1-1 9z" fill="#2c86e0" />
        <path d="M9 6l5-4v6z" fill="#2c86e0" />
        <path d="M9 7l5 2-6 5z" fill="#8cc4f4" />
        <path d="M3 1l4 3H5z" fill="#445" />
      </Icon>
    ),
  },
  {
    name: "F:\\SolidWorks 教程…",
    icon: (
      <Icon>
        <path d="M1 3h5l1 2h7v9H1z" fill="#e8b830" />
        <path d="M1 14L2 6h13l-1 8z" fill="#fbe47c" stroke="#a87c10" strokeWidth="0.6" />
      </Icon>
    ),
  },
  {
    name: "SolidWorks Professio…",
    icon: (
      <Icon>
        <path d="M1 3l10-2 4 2v11l-12 1-2-2z" fill="#c41c1c" />
        <path d="M1 3l10-2 4 2-11 2z" fill="#f06050" />
        <text x="1" y="13" fontSize="8" fontWeight="700" fontFamily="Liberation Sans" fill="#fff">SW</text>
      </Icon>
    ),
  },
];

function TaskBar() {
  return (
    <footer className={`flex h-[29px] shrink-0 items-center bg-[linear-gradient(#8c8c8c,#3c3c3c_13px,#000_14px)] pr-[13px] text-[11px] text-white ${TASK_FONT}`}>
      <button type="button" className="flex w-[102px] shrink-0 items-center gap-1 pl-[7px] font-['DejaVu_Sans',sans-serif] text-[11px] font-bold">
        <Icon w={24} h={24}>
          <path d="M0 1l7 2 5-2 5 2 7-2-1 8-2 3-1 8-8 4-8-4-1-8-2-3z" fill="#4c5056" stroke="#1c1e22" />
          <path d="M2 3l7 5 3 1 3-1 7-5-1 5-6 3v9l-3 2-3-2v-9L3 8z" fill="#8c9096" />
          <path d="M4 11l4 2v7l-3-2zM20 11l-4 2v7l3-2z" fill="#74787e" stroke="#222" strokeWidth="0.7" />
          <path d="M12 2v6M10 12v8M14 12v8M8 12.500l2 1M16 12.500l-2 1" stroke="#222" />
        </Icon>
        PROTECT
      </button>
      <div className="flex w-[98px] shrink-0 items-center gap-[7px] pl-[7px]">
        <IconButton label="桌面">
          <Icon>
            <path d="M2 3l3-2v3h1V1h4v3h1V1l3 2v7l-2 1v4H9v-3H7v3H4v-4l-2-1z" fill="#3a62b8" stroke="#12224c" strokeWidth="0.7" />
            <path d="M5 8h2v6H5zM9 8h2v6H9z" fill="#cfd8e6" />
            <path d="M7 5h2v4H7z" fill="#e4ecf8" />
          </Icon>
        </IconButton>
        <IconButton label="浏览网络">
          <Icon>
            <circle cx="8" cy="8" r="7" fill="url(#globe)" />
            <path d="M4 4c2-3 6-2 7 0s-2 2-2 5-4 2-5 0-1-4 0-5zM11 9l2 1-2 3z" fill="#3cb850" />
          </Icon>
        </IconButton>
        <IconButton label="Internet Explorer"><IeIcon /></IconButton>
        <IconButton label="更多" className="ml-1 mb-3"><Icon w={9} h={6}><path d="M1 0l3 3-3 3M5 0l3 3-3 3" stroke="#fff" strokeWidth="1.2" /></Icon></IconButton>
      </div>
      <div className="flex h-full min-w-0 flex-1 items-center gap-[3px] pt-px">
        {TASKS.map((task) => (
          <button
            key={task.name}
            type="button"
            className={`flex h-[27px] w-[157px] min-w-0 items-center gap-1 rounded-[3px] border border-[#8a8a8a] px-2 text-left whitespace-nowrap shadow-[inset_0_0_0_1px_#111] ${
              task.active ? "bg-linear-to-b from-[#3a3a3a] to-[#141414]" : "bg-[linear-gradient(#6e6e6e,#3d3d3d_12px,#161616_13px,#0c0c0c)]"
            }`}
          >
            {task.icon}
            <span className="overflow-hidden">{task.name}</span>
          </button>
        ))}
      </div>
      <div className="flex shrink-0 items-center">
        <Icon w={15} h={12}><path d="M4 0v1h6v2" stroke="#999" /><rect x=".5" y="3.500" width="14" height="7" fill="#eee" stroke="#fff" /><path d="M2 5.500h11M2 7.500h11M4 9.500h7" stroke="#333" strokeDasharray="1 1" /></Icon>
        <span className="ml-2">
          <Icon w={13} h={14}><rect x=".5" y=".5" width="11" height="12" fill="#fffbe0" stroke="#888" /><path d="M4 5c0-3 5-2 4 0-.5 1-2 1-2 2.500M6 9v1.500" stroke="#111" strokeWidth="1.5" /></Icon>
        </span>
        <span className="ml-[10px]">
          <Icon w={9} h={17}><path d="M3 3V1h5v4H6M1 3h5v4H1z" stroke="#fff" /><path d="M2 13h5l-2.500 3z" fill="#fff" /></Icon>
        </span>
        <span className="ml-[9px]">
          <Icon><circle cx="8" cy="8" r="7.500" fill="#3c3c3c" stroke="#6c6c6c" /><path d="M9.500 5L6 8l3.500 3" stroke="#ddd" strokeWidth="1.5" /></Icon>
        </span>
        <span className="ml-[5px]">
          <Icon w={12} h={12}><rect x=".5" y=".5" width="11" height="11" fill="#0a8c1c" stroke="#d8d8d8" /><path d="M3 1v10M6 1v10M9 1v10M1 3h10M1 6h10M1 9h10" stroke="#0cb42c" strokeWidth="0.5" /></Icon>
        </span>
        <span className="ml-[3px]">
          <Icon><rect x="5" y="1" width="9" height="7" fill="#4cb0f8" stroke="#c8dcf0" /><rect x="1" y="6" width="9" height="7" fill="#2c84e0" stroke="#c8dcf0" /><path d="M3 15h6" stroke="#c8dcf0" /></Icon>
        </span>
        <span className="ml-[3px]">
          <Icon><rect x="1" y="1" width="9" height="7" fill="#2a3c7c" stroke="#8c9cc0" /><rect x="3" y="5" width="6" height="6" fill="#2a3c7c" stroke="#8c9cc0" /><path d="M10 5l6 10H4z" fill="#ffe020" stroke="#947c00" strokeWidth="0.6" /><path d="M10 8v4M10 13v1" stroke="#111" strokeWidth="1.5" /></Icon>
        </span>
        <time className="ml-[6px]">11:32</time>
      </div>
    </footer>
  );
}

export default function App() {
  const [tab, setTab] = useState("视图");

  return (
    <div className={`flex h-screen w-full flex-col overflow-hidden bg-[#9da0a6] ${UI_FONT}`}>
      <Defs />
      <TitleBar />
      <TabRow tab={tab} setTab={setTab} />
      <Ribbon />
      <div className="flex min-h-0 flex-1 bg-[#b7bbc4] pt-[2px]">
        <aside className="mr-[5px] flex w-[217px] shrink-0 flex-col border-l border-white bg-[#b5b8cd]">
          <SelectPane />
          <PathFinder />
        </aside>
        <Viewport />
        <div className="w-[2px] shrink-0 bg-[#e4e5e8]" />
      </div>
      <PromptBar />
      <StatusBar />
      <TaskBar />
    </div>
  );
}
